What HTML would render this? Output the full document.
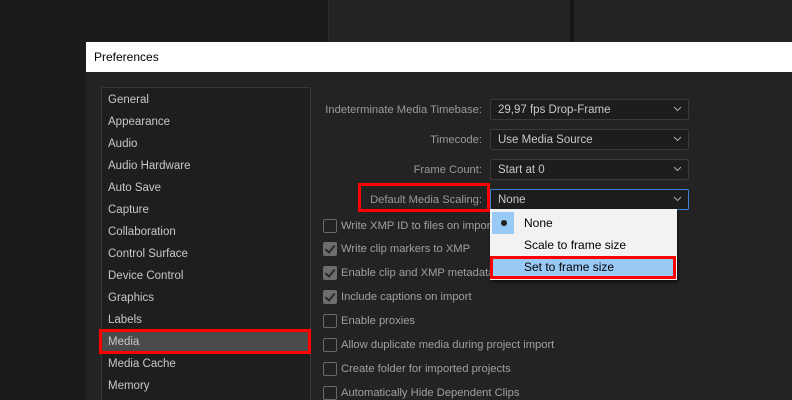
<!DOCTYPE html>
<html><head><style>
*{margin:0;padding:0;box-sizing:border-box}
html,body{width:792px;height:400px;overflow:hidden}
body{background:#1b1b1b;font-family:"Liberation Sans",sans-serif;font-size:11.5px;position:relative}
.a{position:absolute}
.item{position:absolute;left:108px;color:#c8c8c8;font-size:11.5px;margin-top:2px}
.lbl{position:absolute;right:310px;color:#9a9a9a;font-size:11.2px;text-align:right;margin-top:2px}
.dd{position:absolute;left:490px;width:199px;height:21px;background:#1d1d1d;border:1px solid #3a3a3a;border-radius:2px;color:#c8c8c8;padding:4px 0 0 7px}
.dd svg{position:absolute;right:6px;top:6px}
.cb{position:absolute;left:323px;width:14px;height:14px;border:1.5px solid #6a6a6a;border-radius:2px}
.cb.on{background:#6e6e6e;border-color:#6e6e6e}
.cb.on::after{content:"";position:absolute;left:3px;top:0px;width:4px;height:8px;border:solid #2a2a2a;border-width:0 2px 2px 0;transform:rotate(40deg)}
.ct{position:absolute;left:341px;color:#a0a0a0;font-size:11.2px;margin-top:1px}
</style></head><body>
<div class="a" style="left:328px;top:0;width:464px;height:42px;background:#232323"></div>
<div class="a" style="left:328px;top:0;width:1px;height:42px;background:#2c2c2c"></div>
<div class="a" style="left:570px;top:0;width:4px;height:42px;background:#151515"></div>
<div class="a" style="left:86px;top:42px;width:706px;height:30px;background:#fff"></div>
<div class="a" style="left:94px;top:50px;color:#000;font-size:12px">Preferences</div>
<div class="a" style="left:86px;top:72px;width:706px;height:328px;background:#232323"></div>
<div class="a" style="left:101px;top:87px;width:210px;height:320px;background:#1e1e1e;border:1px solid #383838;border-radius:2px"></div>
<div class="a" style="left:101px;top:330px;width:210px;height:22px;background:#4a4a4a"></div>
<div class="a" style="left:99px;top:329px;width:212px;height:25px;border:3px solid #f00"></div>
<div class="item" style="top:92px">General</div>
<div class="item" style="top:114px">Appearance</div>
<div class="item" style="top:136px">Audio</div>
<div class="item" style="top:158px">Audio Hardware</div>
<div class="item" style="top:180px">Auto Save</div>
<div class="item" style="top:202px">Capture</div>
<div class="item" style="top:224px">Collaboration</div>
<div class="item" style="top:246px">Control Surface</div>
<div class="item" style="top:268px">Device Control</div>
<div class="item" style="top:290px">Graphics</div>
<div class="item" style="top:312px">Labels</div>
<div class="item" style="top:334px">Media</div>
<div class="item" style="top:356px">Media Cache</div>
<div class="item" style="top:378px">Memory</div>

<div class="lbl" style="top:102px">Indeterminate Media Timebase:</div>
<div class="lbl" style="top:132px">Timecode:</div>
<div class="lbl" style="top:162px">Frame Count:</div>
<div class="lbl" style="top:192px">Default Media Scaling:</div>
<div class="a" style="left:358px;top:183px;width:132px;height:29px;border:3px solid #f00"></div>
<div class="dd" style="top:99px">29,97 fps Drop-Frame<svg width="9" height="6"><path d="M1 1l3.5 3.5L8 1" stroke="#aaa" fill="none"/></svg></div>
<div class="dd" style="top:129px">Use Media Source<svg width="9" height="6"><path d="M1 1l3.5 3.5L8 1" stroke="#aaa" fill="none"/></svg></div>
<div class="dd" style="top:159px">Start at 0<svg width="9" height="6"><path d="M1 1l3.5 3.5L8 1" stroke="#aaa" fill="none"/></svg></div>
<div class="dd" style="top:189px;border-color:#3b82d8">None<svg width="9" height="6"><path d="M1 1l3.5 3.5L8 1" stroke="#aaa" fill="none"/></svg></div>

<div class="cb" style="top:219px"></div><div class="ct" style="top:219px">Write XMP ID to files on import</div>
<div class="cb on" style="top:242px"></div><div class="ct" style="top:242px">Write clip markers to XMP</div>
<div class="cb on" style="top:266px"></div><div class="ct" style="top:266px">Enable clip and XMP metadata linking</div>
<div class="cb on" style="top:290px"></div><div class="ct" style="top:290px">Include captions on import</div>
<div class="cb" style="top:314px"></div><div class="ct" style="top:314px">Enable proxies</div>
<div class="cb" style="top:338px"></div><div class="ct" style="top:338px">Allow duplicate media during project import</div>
<div class="cb" style="top:362px"></div><div class="ct" style="top:362px">Create folder for imported projects</div>
<div class="cb" style="top:386px"></div><div class="ct" style="top:386px">Automatically Hide Dependent Clips</div>

<div class="a" style="left:490px;top:209px;width:187px;height:71px;background:#f2f2f2;box-shadow:1px 2px 3px rgba(0,0,0,.6)"></div>
<div class="a" style="left:492px;top:212px;width:22px;height:22px;background:#99c9f5"></div>
<div class="a" style="left:501px;top:220px;width:6px;height:6px;border-radius:50%;background:#222"></div>
<div class="a" style="left:524px;top:216px;color:#000;font-size:12px">None</div>
<div class="a" style="left:524px;top:238px;color:#000;font-size:12px">Scale to frame size</div>
<div class="a" style="left:490px;top:256px;width:186px;height:23px;background:#99c9f5;border:3px solid #f00"></div>
<div class="a" style="left:524px;top:260px;color:#000;font-size:12px">Set to frame size</div>
</body></html>
